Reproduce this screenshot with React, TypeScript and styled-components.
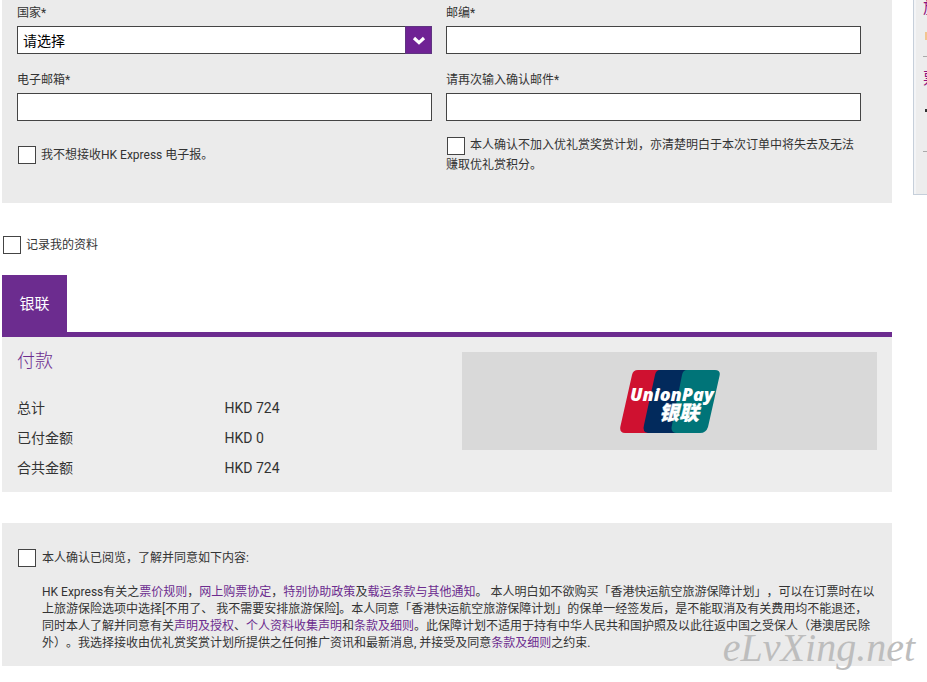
import React from "react";
import styled, { createGlobalStyle } from "styled-components";

const purple = "#6c2c8f";

const GlobalStyle = createGlobalStyle`
  *, *::before, *::after { box-sizing: border-box; }
  body {
    margin: 0;
    background: #fff;
    color: #333;
    font: 12px/18px Roboto, "Noto Sans CJK SC", sans-serif;
    text-spacing-trim: space-all;
    overflow-x: hidden;
  }
`;

const Page = styled.div`
  position: relative;
  display: grid;
  grid-template-columns: minmax(0, 1fr) 14px;
  column-gap: 21px;
  align-items: start;
  padding: 0 0 16px 2px;
  overflow: hidden;
`;

const Main = styled.main`
  display: flex;
  flex-direction: column;
`;

const ContactPanel = styled.section`
  display: grid;
  grid-template-columns: 1fr 1fr;
  gap: 14px;
  padding: 1px 31px 28px 15px;
  background: #ebebeb;
`;

const Field = styled.div`
  display: flex;
  flex-direction: column;
  gap: 4px;
  padding-top: 3px;
`;

const TextInput = styled.input`
  width: 100%;
  height: 28px;
  padding: 0 5px;
  border: 1px solid #444;
  border-radius: 0;
  background: #fff;
  font: inherit;
  font-size: 14px;
`;

const SelectBox = styled.div`
  position: relative;
`;

const Select = styled.select`
  display: block;
  width: 100%;
  height: 28px;
  padding: 2px 32px 0 5px;
  border: 1px solid #444;
  border-radius: 0;
  background: #fff;
  color: #000;
  appearance: none;
  font: inherit;
  font-size: 14px;
`;

const SelectArrow = styled.span`
  position: absolute;
  top: 0;
  right: 0;
  bottom: 0;
  width: 27px;
  display: flex;
  align-items: center;
  justify-content: center;
  border: 1px solid #5f3580;
  background: #6f2294;
  pointer-events: none;
`;

const Checkbox = styled.input.attrs({ type: "checkbox" })`
  flex: none;
  width: 18px;
  height: 18px;
  margin: 0;
  border: 1px solid #444;
  background: #fff;
  appearance: none;
  &:checked { background: ${purple}; box-shadow: inset 0 0 0 3px #fff; }
`;

const CheckLabel = styled.label`
  display: flex;
  align-items: center;
  gap: 6px;
  padding-left: 1px;
`;

const WrappedCheckLabel = styled.label`
  line-height: 20px;
  ${Checkbox} {
    margin: 0 5px 0 1px;
    vertical-align: bottom;
  }
`;

const ContactCheckLabel = styled(CheckLabel)`
  gap: 5px;
`;

const RememberRow = styled.div`
  padding: 33px 0 21px;
`;

const Tabs = styled.div`
  display: flex;
  border-bottom: 5px solid ${purple};
`;

const Tab = styled.button`
  min-width: 65px;
  height: 57px;
  padding: 0 16px;
  border: 0;
  background: ${purple};
  color: #fff;
  font: inherit;
  font-size: 15px;
`;

const PaymentPanel = styled.section`
  display: grid;
  grid-template-columns: 1fr 1fr;
  background: #ededed;
`;

const Summary = styled.div`
  padding: 11px 15px 9px;
`;

const Heading = styled.h2`
  margin: 0 0 19px;
  color: ${purple};
  font-size: 18px;
  line-height: 26px;
  font-weight: 300;
`;

const Amounts = styled.table`
  width: 100%;
  border-collapse: collapse;
  table-layout: fixed;
  font-size: 14px;
  th, td {
    height: 30px;
    padding: 0;
    text-align: left;
    font-weight: 400;
  }
`;

const CardArea = styled.div`
  padding: 15px;
`;

const CardBox = styled.div`
  display: flex;
  justify-content: center;
  height: 98px;
  padding-top: 18px;
  background: #d9d9d9;
`;

const TermsPanel = styled.section`
  display: flex;
  flex-direction: column;
  gap: 17px;
  margin-top: 31px;
  padding: 26px 15px 14px;
  background: #ebebeb;
`;

const TermsText = styled.p`
  margin: 0;
  padding-left: 25px;
  line-height: 17px;
`;

const TermsLink = styled.a`
  color: ${purple};
  text-decoration: none;
`;

const Sidebar = styled.aside`
  height: 195px;
  border: solid #c6cfda;
  border-width: 0 0 1px 1px;
  padding-left: 9px;
  background: #ededed;
  box-shadow: inset 2px 0 0 #f3f4f6;
  color: #92107c;
  font-size: 16px;
  line-height: 16px;
  overflow: hidden;
  white-space: nowrap;
`;

const SideBlock = styled.div<{ $height: number }>`
  display: flex;
  flex-direction: column;
  justify-content: space-between;
  height: ${(p) => p.$height}px;
  padding-bottom: 16px;
  border-bottom: 1px solid #aaa;
`;

const SideTitle = styled.div<{ $top: number }>`
  padding-top: ${(p) => p.$top}px;
`;

const SideMark = styled.div<{ $color: string; $height: number; $gap: number }>`
  width: 12px;
  height: ${(p) => p.$height}px;
  margin: 0 0 ${(p) => p.$gap}px 2px;
  background: ${(p) => p.$color};
`;

const Watermark = styled.span`
  position: absolute;
  right: 12px;
  bottom: 12px;
  color: #bdbdbd;
  font: italic 40px/44px "Liberation Serif", serif;
  pointer-events: none;
`;

function Chevron() {
  return (
    <svg width="14" height="9" viewBox="0 0 14 9" aria-hidden="true">
      <path d="M2 2 L7 6.6 L12 2" fill="none" stroke="#fff" strokeWidth="3.2" />
    </svg>
  );
}

function UnionPay() {
  return (
    <svg width="100" height="63" viewBox="0 0 100 63" role="img" aria-label="UnionPay 银联">
      <path d="M18 0H42L30 63H5Q-1 63 .5 56L12 5Q13 0 18 0Z" fill="#cf1130" />
      <path d="M40 0H68L56 63H28Q22 62 24 55L35 5Q36 0 40 0Z" fill="#022a5c" />
      <path d="M67 0H95Q101 0 99.500 6L88 57Q86 63 80 63H56Q50 62 52 55L62 5Q63 0 67 0Z" fill="#007478" />
      <text x="10" y="31" fill="#fff" fontFamily="Open Sans, sans-serif" fontSize="18" fontWeight="800" fontStyle="italic">UnionPay</text>
      <text x="39" y="50" fill="#fff" stroke="#fff" strokeWidth=".3" fontFamily="Noto Sans CJK SC, sans-serif" fontSize="20" fontWeight="900" fontStyle="italic">银联</text>
    </svg>
  );
}

const amounts = [
  ["总计", "HKD 724"],
  ["已付金额", "HKD 0"],
  ["合共金额", "HKD 724"],
];

export default function App() {
  return (
    <>
      <GlobalStyle />
      <Page>
        <Main>
          <ContactPanel>
            <Field>
              <label htmlFor="country">国家*</label>
              <SelectBox>
                <Select id="country">
                  <option>请选择</option>
                </Select>
                <SelectArrow><Chevron /></SelectArrow>
              </SelectBox>
            </Field>
            <Field>
              <label htmlFor="postcode">邮编*</label>
              <TextInput id="postcode" type="text" />
            </Field>
            <Field>
              <label htmlFor="email">电子邮箱*</label>
              <TextInput id="email" type="email" />
            </Field>
            <Field>
              <label htmlFor="email2">请再次输入确认邮件*</label>
              <TextInput id="email2" type="email" />
            </Field>
            <ContactCheckLabel><Checkbox />我不想接收HK Express 电子报。</ContactCheckLabel>
            <WrappedCheckLabel>
              <Checkbox />本人确认不加入优礼赏奖赏计划，亦清楚明白于本次订单中将失去及无法赚取优礼赏积分。
            </WrappedCheckLabel>
          </ContactPanel>
          <RememberRow>
            <ContactCheckLabel><Checkbox />记录我的资料</ContactCheckLabel>
          </RememberRow>
          <Tabs>
            <Tab type="button">银联</Tab>
          </Tabs>
          <PaymentPanel>
            <Summary>
              <Heading>付款</Heading>
              <Amounts>
                <tbody>
                  {amounts.map(([name, value]) => (
                    <tr key={name}>
                      <th scope="row">{name}</th>
                      <td>{value}</td>
                    </tr>
                  ))}
                </tbody>
              </Amounts>
            </Summary>
            <CardArea>
              <CardBox><UnionPay /></CardBox>
            </CardArea>
          </PaymentPanel>
          <TermsPanel>
            <CheckLabel><Checkbox />本人确认已阅览，了解并同意如下内容:</CheckLabel>
            <TermsText>
              HK Express有关之<TermsLink href="#fares">票价规则</TermsLink>，<TermsLink href="#booking">网上购票协定</TermsLink>，<TermsLink href="#assistance">特别协助政策</TermsLink>及<TermsLink href="#carriage">载运条款与其他通知</TermsLink>。 本人明白如不欲购买「香港快运航空旅游保障计划」，可以在订票时在以上旅游保险选项中选择[不用了、 我不需要安排旅游保险]。本人同意「香港快运航空旅游保障计划」的保单一经签发后，是不能取消及有关费用均不能退还，同时本人了解并同意有关<TermsLink href="#authorisation">声明及授权</TermsLink>、<TermsLink href="#privacy">个人资料收集声明</TermsLink>和<TermsLink href="#terms">条款及细则</TermsLink>。此保障计划不适用于持有中华人民共和国护照及以此往返中国之受保人（港澳居民除外）。我选择接收由优礼赏奖赏计划所提供之任何推广资讯和最新消息, 并接受及同意<TermsLink href="#rewards">条款及细则</TermsLink>之约束.
            </TermsText>
          </TermsPanel>
        </Main>
        <Sidebar>
          <SideBlock $height={57}>
            <SideTitle $top={0}>旅</SideTitle>
            <SideMark $color="#f3c590" $height={8} $gap={0} />
          </SideBlock>
          <SideBlock $height={95}>
            <SideTitle $top={14}>票</SideTitle>
            <SideMark $color="#333" $height={3} $gap={23} />
          </SideBlock>
        </Sidebar>
        <Watermark>eLvXing.net</Watermark>
      </Page>
    </>
  );
}
